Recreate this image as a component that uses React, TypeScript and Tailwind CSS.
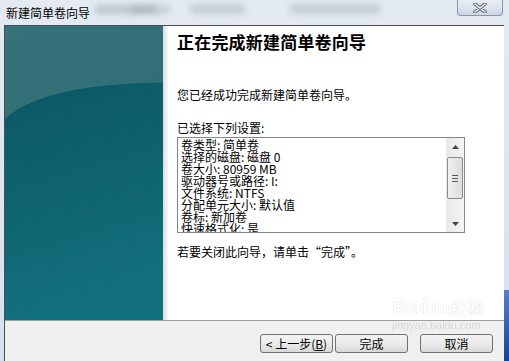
import React from "react";

const CJK = { fontFamily: '"Noto Sans CJK SC", "Noto Sans", sans-serif' };

function CloseButton() {
  return (
    <div className="absolute top-0 right-[6px] w-[46px] h-[16px] rounded-b-[4px] border border-t-0 border-[#8a96a6] bg-gradient-to-b from-[#e9eef5] to-[#cdd7e4] flex items-center justify-center">
      <svg width="14" height="10" viewBox="0 0 14 10">
        <path d="M2 1 L12 9 M12 1 L2 9" stroke="#4b5563" strokeWidth="3.4" strokeLinecap="round" />
        <path d="M2 1 L12 9 M12 1 L2 9" stroke="#ffffff" strokeWidth="1.6" strokeLinecap="round" />
      </svg>
    </div>
  );
}

function TealPanel() {
  return (
    <div className="w-[158px] h-full shrink-0">
      <svg width="158" height="294" viewBox="0 0 158 294" className="block">
        <defs>
          <linearGradient id="top" x1="0" y1="0" x2="0.3" y2="1">
            <stop offset="0" stopColor="#357279" />
            <stop offset="1" stopColor="#2c6970" />
          </linearGradient>
          <linearGradient id="bot" x1="0" y1="0" x2="0.2" y2="1">
            <stop offset="0" stopColor="#0b5764" />
            <stop offset="0.5" stopColor="#0f6370" />
            <stop offset="1" stopColor="#13707d" />
          </linearGradient>
        </defs>
        <rect width="158" height="294" fill="url(#top)" />
        <path d="M0 92 C 28 68 80 57 158 56 L158 294 L0 294 Z" fill="url(#bot)" />
        <path d="M0 92 C 28 68 80 57 158 56" stroke="#3f7c83" strokeWidth="1" fill="none" opacity="0.6" />
      </svg>
    </div>
  );
}

function ScrollBar() {
  return (
    <div className="w-[18px] h-full shrink-0 bg-gradient-to-r from-[#e8e8e8] to-[#f4f4f4] flex flex-col items-center">
      <div className="h-[17px] w-full flex items-center justify-center">
        <svg width="7" height="4" viewBox="0 0 7 4"><path d="M0 4 L3.5 0 L7 4 Z" fill="#444" /></svg>
      </div>
      <div className="w-[16px] h-[42px] mt-[2px] rounded-[2px] border border-[#8c8c8c] bg-gradient-to-r from-[#f2f2f2] to-[#dcdcdc] flex flex-col items-center justify-center gap-[2px]">
        <div className="w-[6px] h-px bg-[#555]" />
        <div className="w-[6px] h-px bg-[#555]" />
        <div className="w-[6px] h-px bg-[#555]" />
      </div>
      <div className="flex-1" />
      <div className="h-[17px] w-full flex items-center justify-center">
        <svg width="7" height="4" viewBox="0 0 7 4"><path d="M0 0 L3.5 4 L7 0 Z" fill="#444" /></svg>
      </div>
    </div>
  );
}

function Btn({ children, className = "" }: { children: React.ReactNode; className?: string }) {
  return (
    <div
      className={
        "w-[73px] h-[19px] rounded-[3px] border border-[#707070] bg-gradient-to-b from-[#f3f3f3] via-[#ebebeb] to-[#d9d9d9] flex items-center justify-center text-[12px] leading-none text-black " +
        className
      }
    >
      {children}
    </div>
  );
}

export default function App() {
  const lines = [
    "卷类型: 简单卷",
    "选择的磁盘: 磁盘 0",
    "卷大小: 80959 MB",
    "驱动器号或路径: I:",
    "文件系统: NTFS",
    "分配单元大小: 默认值",
    "卷标: 新加卷",
    "快速格式化: 是",
  ];
  return (
    <div className="relative w-[509px] h-[361px] overflow-hidden bg-gradient-to-b from-[#e3eaf2] to-[#d6e1ee]" style={CJK}>
      {/* blurred glass background blobs */}
      <div className="absolute left-[95px] top-[5px] w-[60px] h-[9px] bg-[#9aa4b0] opacity-50 blur-[3px]" />
      <div className="absolute left-[130px] top-[5px] w-[40px] h-[9px] bg-[#9aa4b0] opacity-40 blur-[3px]" />
      <div className="absolute left-[190px] top-[4px] w-[55px] h-[10px] bg-[#9aa4b0] opacity-40 blur-[3px]" />
      <div className="absolute left-[290px] top-[4px] w-[90px] h-[10px] bg-[#9aa4b0] opacity-40 blur-[3px]" />
      <div className="absolute right-0 top-[290px] w-[5px] h-[71px] bg-gradient-to-b from-[#5a7fc0] to-[#1a3f9a]" />

      {/* title bar */}
      <div className="h-[25px] pl-[6px] flex items-center text-[12px] text-black leading-none">新建简单卷向导</div>
      <CloseButton />

      {/* client area */}
      <div className="ml-[4px] w-[500px] h-[336px] border-l border-t border-[#4a4f57] flex flex-col bg-white">
        <div className="h-[294px] flex">
          <TealPanel />
          <div className="w-[5px] h-full bg-gradient-to-r from-[#dcdcdc] to-[#f7f7f7]" />
          <div className="flex-1 pl-[9px] pt-[6px] text-black">
            <div className="text-[17px] font-bold leading-[20px] tracking-[0.2px]">正在完成新建简单卷向导</div>
            <div className="mt-[36px] text-[12px] leading-[14px]">您已经成功完成新建简单卷向导。</div>
            <div className="mt-[19px] text-[12px] leading-[14px]">已选择下列设置:</div>
            <div className="mt-[2px] w-[288px] h-[96px] border border-[#828790] flex overflow-hidden">
              <div className="flex-1 pl-[3px] pt-[1px] text-[12px] leading-[12px] overflow-hidden">
                {lines.map((l) => (
                  <div key={l} className="h-[12px] whitespace-nowrap">{l}</div>
                ))}
              </div>
              <ScrollBar />
            </div>
            <div className="mt-[12px] text-[12px] leading-[14px]">若要关闭此向导，请单击“完成”。</div>
          </div>
        </div>
        <div className="flex-1 border-t border-[#a0a0a0] bg-[#f0f0f0] flex justify-end pt-[13px] pr-[11px]">
          <Btn>&lt; 上一步(<span className="underline">B</span>)</Btn>
          <Btn className="ml-[2px]">完成</Btn>
          <Btn className="ml-[12px]">取消</Btn>
        </div>
      </div>

      {/* watermark */}
      <div className="absolute left-[392px] top-[296px] text-white opacity-70 pointer-events-none leading-none">
        <div className="text-[22px] font-bold tracking-[1px] [text-shadow:0_0_1px_#9aa]" style={{ fontFamily: '"Liberation Sans", "Noto Sans CJK SC", sans-serif' }}>Bai<span className="text-[16px]">du</span><span className="text-[16px]">经验</span></div>
        <div className="mt-[2px] text-[11px] text-[#c8cfd6]" style={{ fontFamily: '"Liberation Sans", sans-serif' }}>jingyan.baidu.com</div>
      </div>
    </div>
  );
}
